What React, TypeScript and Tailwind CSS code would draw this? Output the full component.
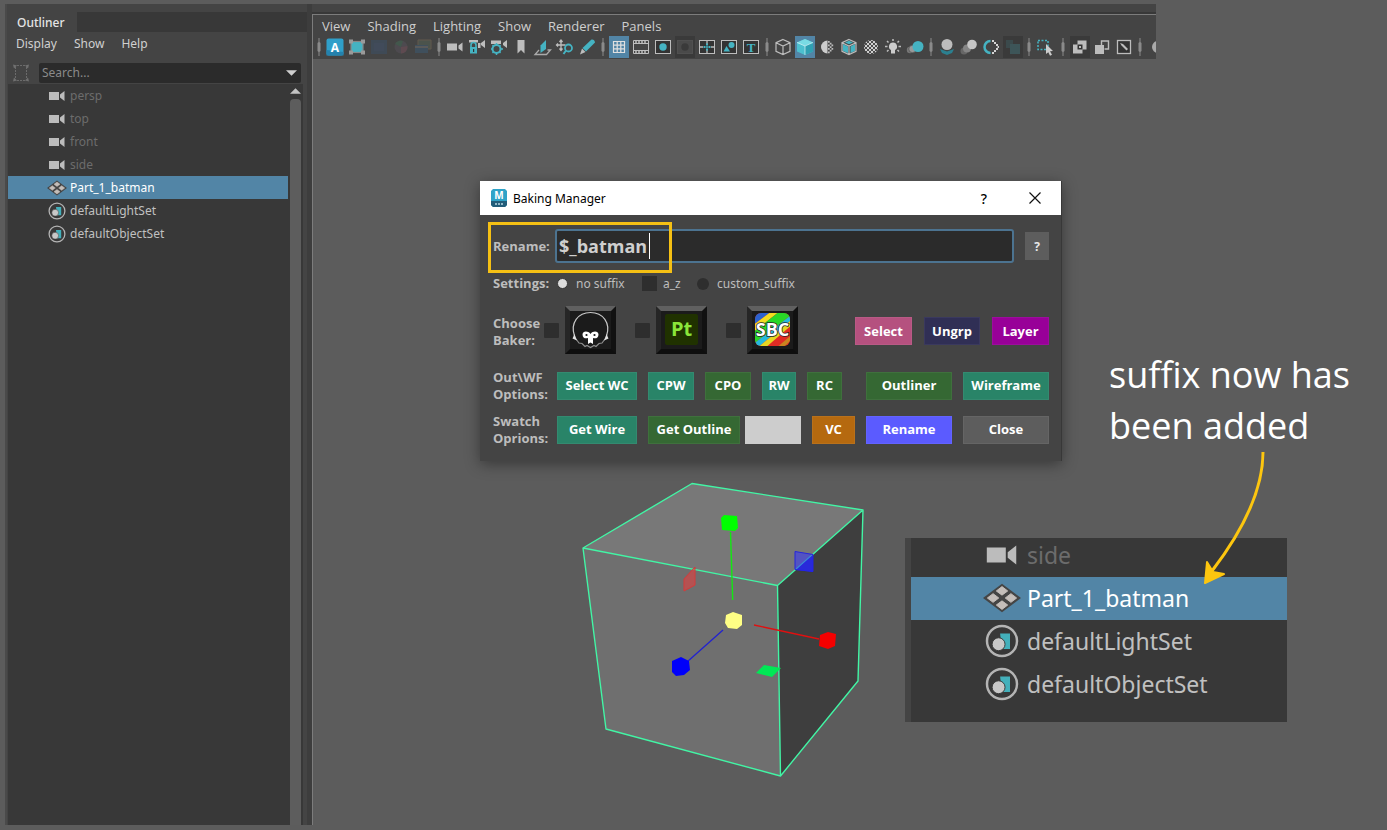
import type { ReactNode } from "react";

const TEAL = "#45b3c2";
const LIGHT = "#bdbdbd";

function Tool({ label, active, pressed, children }: { label: string; active?: boolean; pressed?: boolean; children: ReactNode }) {
  const tone = active ? "bg-[#5285a6]" : pressed ? "bg-[#3a3a3a]" : "";
  return (
    <button type="button" aria-label={label} className="flex h-[22px] w-[22px] flex-none items-center justify-center">
      <svg viewBox="0 0 22 22" className={`h-[22px] w-[20px] ${tone}`} preserveAspectRatio="xMidYMid slice">
        {children}
      </svg>
    </button>
  );
}

function Separator({ wide }: { wide?: boolean }) {
  return (
    <span className={`flex h-[22px] flex-none items-center justify-center ${wide ? "w-[13px]" : "w-[10px]"}`}>
      <svg viewBox="0 0 4 18" className="h-[18px] w-1">
        <path d="M1.500 0h1v4l1 1v8l-1 1v4h-1v-4l-1-1V5l1-1z" fill="#8a8a8a" />
      </svg>
    </span>
  );
}

function CameraGlyph() {
  return <path d="M3 7.500h10v7H3zM18.500 6.500v9l-4-3v-3z" fill={LIGHT} />;
}

function CubeEdges({ stroke }: { stroke: string }) {
  return <path d="M11 3.500l7 3.200v8.600l-7 3.200-7-3.200V6.700zM4 6.700l7 3.300 7-3.300M11 10v8.500" fill="none" stroke={stroke} strokeWidth="1.200" />;
}

function Toolbar() {
  return (
    <div className="flex h-[23px] overflow-hidden pl-px">
      <Separator />
      <Tool label="Select camera">
        <rect x="2.500" y="2.500" width="17" height="17" rx="2" fill="#2f9fc9" />
        <path d="M2.500 14l17 2v3.500h-17z" fill="#2482ae" />
        <text x="11" y="15.500" textAnchor="middle" fontSize="12" fontWeight="700" fontFamily="Open Sans, sans-serif" fill="#fff">A</text>
      </Tool>
      <Tool label="Frame region">
        <rect x="5" y="5.500" width="12" height="11" fill={TEAL} stroke="#888" strokeWidth="1.200" />
        <path d="M3 3.500h4v4H3zM15 3.500h4v4h-4zM3 14.500h4v4H3zM15 14.500h4v4h-4z" fill="#9a9a9a" />
      </Tool>
      <Tool label="Render frame">
        <rect x="3" y="4" width="16" height="14" fill="#3f4a56" />
        <rect x="6" y="7" width="10" height="8" fill="#414b5a" />
      </Tool>
      <Tool label="Color management">
        <circle cx="11" cy="11" r="6.500" fill="#4d4a4f" />
        <path d="M11 11L5 8a6.500 6.500 0 0 1 8-3z" fill="#42574c" />
        <path d="M11 11l6.500-1a6.500 6.500 0 0 1-6.500 7.500z" fill="#5e4a50" />
      </Tool>
      <Tool label="Render sequence">
        <path d="M6 4h13v9H6z" fill="#4b534c" stroke="#63584c" />
        <path d="M3 9h13v8H3z" fill="#3f4f5c" />
        <path d="M3 11h13" stroke="#5a5a5a" strokeWidth="2" />
      </Tool>
      <Separator />
      <Tool label="Camera"><CameraGlyph /></Tool>
      <Tool label="Lock camera">
        <path d="M3 4h9v2.500H3zM19 4v8l-4-3V7z" fill={LIGHT} />
        <path d="M12 7h2.500v5H12z" fill={LIGHT} />
        <path d="M5 11V9a2.500 2.500 0 0 1 5 0v2" fill="none" stroke={TEAL} strokeWidth="1.600" />
        <path d="M4 11h7v6.500H4z" fill={TEAL} />
        <path d="M7 13h1.200v3H7z" fill="#333" />
      </Tool>
      <Tool label="Camera attributes">
        <path d="M3 4.500h10V8H3zM19 4v8l-4-3V7z" fill={LIGHT} />
        <circle cx="8.500" cy="13" r="4" fill="#444" stroke={TEAL} strokeWidth="2" />
        <path d="M8.500 7v2M8.500 17v2M3 13h1M13 13h2M4.500 9l1 1M12.500 9l-1 1M4.500 17l1-1M12.500 17l-1-1" stroke={TEAL} strokeWidth="1.500" />
      </Tool>
      <Tool label="Bookmarks"><path d="M7.500 4h7v13.500L11 14l-3.500 3.500z" fill={LIGHT} /></Tool>
      <Tool label="Image plane">
        <path d="M8.500 9.500L14 4v9l-5.500 4z" fill={TEAL} />
        <path d="M7 14l-4 4.500h11.500l4-4.500h-3" fill="none" stroke="#aaa" strokeWidth="1.300" />
      </Tool>
      <Tool label="2D pan and zoom">
        <path d="M7 4.500v9M2.500 9h9M5.500 6L7 4l1.500 2M5.500 12.500L7 14.500l1.500-2M4 7.500L2.500 9 4 10.500" fill="none" stroke={LIGHT} strokeWidth="1.300" />
        <circle cx="14.500" cy="12" r="3.500" fill="#444" stroke={TEAL} strokeWidth="1.800" />
        <path d="M12 14.500L9.500 18" stroke={TEAL} strokeWidth="2" />
      </Tool>
      <Tool label="Grease pencil">
        <path d="M15.500 3.500q3-.5 3.500 3l-9 9-3.500-3.500z" fill={TEAL} />
        <path d="M6 12.500l3.500 3.500L4 18.500z" fill={LIGHT} />
      </Tool>
      <Separator />
      <Tool label="Grid" active>
        <path d="M5.500 5.500h11v11h-11zM9.200 5.500v11M12.800 5.500v11M5.500 9.200h11M5.500 12.800h11" fill="none" stroke="#e0e0e0" strokeWidth="1.200" />
      </Tool>
      <Tool label="Film gate">
        <path d="M3.500 4.500h15v13h-15zM3.500 7.500h15M3.500 14.500h15" fill="none" stroke={LIGHT} />
        <path d="M5 6h12M5 16h12" stroke={LIGHT} strokeWidth="1.500" strokeDasharray="2 1" />
      </Tool>
      <Tool label="Resolution gate">
        <rect x="3.500" y="4.500" width="15" height="13" fill="#333" stroke={LIGHT} /><circle cx="11" cy="11" r="3.700" fill={TEAL} />
      </Tool>
      <Tool label="Gate mask" pressed>
        <rect x="3.500" y="4.500" width="15" height="13" fill="#4a4a4a" stroke="#505050" /><circle cx="11" cy="11" r="3.700" fill="#3a3a3a" />
      </Tool>
      <Tool label="Field chart">
        <rect x="3.500" y="4.500" width="15" height="13" fill="#333" stroke={LIGHT} />
        <path d="M11 5v3M11 14v3M4 11h3M15 11h3" stroke={LIGHT} strokeWidth="1.300" />
        <path d="M7.500 11h2M12.500 11h2M11 7.500v2M11 12.500v2" stroke={TEAL} strokeWidth="2" />
        <circle cx="11" cy="11" r="1" fill={TEAL} />
      </Tool>
      <Tool label="Safe action">
        <rect x="3.500" y="4.500" width="15" height="13" fill="#333" stroke={LIGHT} />
        <circle cx="13.500" cy="9" r="3" fill={TEAL} /><path d="M5.500 15.500l3-5.500 3.500 5.500z" fill={TEAL} />
      </Tool>
      <Tool label="Safe title">
        <rect x="3.500" y="4.500" width="15" height="13" fill="#333" stroke={LIGHT} />
        <text x="11" y="15.500" textAnchor="middle" fontSize="13" fontWeight="700" fontFamily="Liberation Serif, serif" fill={TEAL}>T</text>
      </Tool>
      <Separator />
      <Tool label="Wireframe shading"><CubeEdges stroke={LIGHT} /></Tool>
      <Tool label="Smooth shading" active>
        <path d="M11 3l8 3.500v9L11 19l-8-3.500v-9z" fill="#4cc0cf" />
        <path d="M11 3l8 3.500-8 3.500-8-3.500z" fill="#79dbe4" />
        <path d="M11 10l8-3.500v9L11 19z" fill="#2fa0b2" />
        <path d="M3 6.500l8 3.500 8-3.500M11 10v9" fill="none" stroke="#d8f3f6" strokeWidth=".7" />
      </Tool>
      <Tool label="Default material">
        <path d="M11.500 4.500v13a6.500 6.500 0 0 1 0-13z" fill="#ccc" />
        <path d="M12 5h1.700v1.700H12zM12 8.500h1.700v1.700H12zM12 12h1.700v1.700H12zM12 15.500h1.700v1.700H12zM13.800 6.700h1.700v1.700h-1.700zM13.800 10.200h1.700v1.700h-1.700zM13.800 13.700h1.700v1.700h-1.700zM15.500 8.500h1.700v1.700h-1.700zM15.500 12h1.700v1.700h-1.700z" fill={LIGHT} />
      </Tool>
      <Tool label="Wireframe on shaded">
        <path d="M5 8l5 2.500v6.500L5 15zM12.500 10.500L17 8v7l-4.500 2zM7 6.500l4-1.700 4 1.700-4 1.700z" fill={TEAL} />
        <CubeEdges stroke={LIGHT} />
      </Tool>
      <Tool label="Textured">
        <defs>
          <pattern id="checker" width="4" height="4" patternUnits="userSpaceOnUse" x="1" y="1">
            <path d="M0 0h2v2H0zM2 2h2v2H2z" fill="#d0d0d0" />
          </pattern>
        </defs>
        <circle cx="11" cy="11" r="7" fill="#4c4c4c" />
        <circle cx="11" cy="11" r="7" fill="url(#checker)" />
      </Tool>
      <Tool label="Use all lights">
        <path d="M11 6.500a4 4 0 0 0-2 7.500v3.500h4V14a4 4 0 0 0-2-7.500z" fill="#ccc" />
        <path d="M11 3v2M5 5l1.500 1.500M17 5l-1.500 1.500M3 10.500h2.500M16.500 10.500H19M5 15.500L6.500 14M17 15.500L15.500 14" stroke={LIGHT} strokeWidth="1.500" />
      </Tool>
      <Tool label="Shadows">
        <circle cx="6" cy="14" r="3.200" fill="#777" /><circle cx="8.500" cy="13" r="3.700" fill="#999" stroke="#444" strokeWidth=".6" /><circle cx="14" cy="10.500" r="5.500" fill={TEAL} />
      </Tool>
      <Separator />
      <Tool label="Ambient occlusion">
        <path d="M4 13l7 2.500 7-2.500-2 4-5 2-5-2z" fill="#2b8090" /><circle cx="11" cy="8.500" r="5.500" fill={LIGHT} />
      </Tool>
      <Tool label="Motion blur">
        <circle cx="6" cy="15" r="3.500" fill="#666" /><circle cx="9" cy="12.500" r="4" fill="#858585" /><circle cx="14" cy="8.500" r="4.800" fill="#c6c6c6" />
      </Tool>
      <Tool label="Anti-aliasing">
        <path d="M10.500 5a6 6 0 0 0 0 12" fill="none" stroke={TEAL} strokeWidth="2.500" />
        <path d="M12 4h2v2h-2zM14 6h2v2h-2zM16 8h2v2h-2zM17.500 10h1.500v2h-1.500zM16 12h2v2h-2zM14 14h2v2h-2zM12 16h2v2h-2z" fill="#d4d4d4" />
      </Tool>
      <Tool label="Depth of field" pressed>
        <rect x="4" y="4" width="7" height="8" fill="#3b4a4c" /><rect x="8" y="8" width="10" height="10" fill="#3d5558" />
      </Tool>
      <Separator />
      <Tool label="Isolate select">
        <path d="M4 4.500h10v9H4z" fill="none" stroke={TEAL} strokeWidth="1.500" strokeDasharray="2 1.500" />
        <path d="M12 8l7 7-3 .3 2 3.400-2 1-1.700-3.500L12 18z" fill="#ccc" />
      </Tool>
      <Separator wide />
      <Tool label="X-ray" pressed>
        <path d="M8.500 4.500h9v9h-9z" fill={LIGHT} /><path d="M4 8.500h9.500v9H4z" fill={LIGHT} />
        <path d="M8.500 8.500h5v5h-5z" fill="#333" /><path d="M10 10h2v2h-2z" fill={LIGHT} />
      </Tool>
      <Tool label="X-ray active components">
        <path d="M10.500 9V5h7v8h-4" fill="none" stroke={LIGHT} strokeWidth="1.400" /><rect x="4" y="9" width="9" height="9" fill={LIGHT} />
      </Tool>
      <Tool label="X-ray joints">
        <rect x="4.500" y="4.500" width="13" height="13" fill="#333" stroke={LIGHT} strokeWidth="1.300" />
        <path d="M7 7l3 1 5 5-1.500 1.500-5-5z" fill={LIGHT} />
      </Tool>
      <Separator />
      <Tool label="Exposure"><circle cx="13" cy="11" r="6" fill="#aaa" /><circle cx="14" cy="11" r="3" fill="#444" /></Tool>
    </div>
  );
}

type Kind = "camera" | "mesh" | "set";

function NodeIcon({ kind, className }: { kind: Kind; className: string }) {
  return (
    <svg viewBox="0 0 20 20" className={className} aria-hidden="true">
      {kind === "camera" && <path d="M2 6h10v8H2zM17.500 5v10L13 11.500v-3z" fill="#bcbcbc" />}
      {kind === "mesh" && (
        <>
          <path d="M10 2.500L20 10l-10 7.500L0 10z" fill="#454545" />
          <path d="M10 4l3 2.300-3 2.200-3-2.200zM5.300 7.700l3 2.300-3 2.300-3-2.300zM14.700 7.700l3 2.300-3 2.300-3-2.300zM10 11.500l3 2.200-3 2.300-3-2.300z" fill="#c4beba" stroke="#c4beba" strokeWidth=".5" strokeLinejoin="round" />
        </>
      )}
      {kind === "set" && (
        <>
          <circle cx="10" cy="10" r="7.900" fill="#383838" stroke="#b4b4b4" strokeWidth="1.300" />
          <path d="M9 6h5.200v8.200H10z" fill="#43b0bb" />
          <circle cx="8.200" cy="11.700" r="3.400" fill="#c8c8c8" stroke="#383838" strokeWidth=".5" />
        </>
      )}
    </svg>
  );
}

const NODES: { name: string; kind: Kind }[] = [
  { name: "persp", kind: "camera" },
  { name: "top", kind: "camera" },
  { name: "front", kind: "camera" },
  { name: "side", kind: "camera" },
  { name: "Part_1_batman", kind: "mesh" },
  { name: "defaultLightSet", kind: "set" },
  { name: "defaultObjectSet", kind: "set" },
];

const rowTone = { camera: "text-[#6c6c6c]", mesh: "bg-[#5285a6] text-white", set: "text-[#c0c0c0]" };

function Outliner() {
  return (
    <aside className="flex w-[302px] flex-none flex-col border-l-2 border-[#4a4a4a] bg-[#444] font-['Noto_Sans',sans-serif] text-[12px] leading-4 text-[#d0d0d0]">
      <div className="mt-2 flex h-5 bg-[#383838]">
        <h2 className="bg-[#444] pt-[3px] pr-3 pl-[10px] font-medium text-[#e4e4e4]">Outliner</h2>
      </div>
      <nav className="flex gap-[17px] pt-1 pb-[10px] pl-[9px]">
        <button type="button">Display</button>
        <button type="button">Show</button>
        <button type="button">Help</button>
      </nav>
      <div className="flex h-[22px] items-center pr-[6px] pl-1">
        <svg viewBox="0 0 20 20" className="mr-2 h-5 w-5 flex-none" aria-hidden="true">
          <path d="M4.500 4v12M15.500 4v12M6 2.500h8M6 17.500h8" stroke="#6b6b6b" strokeDasharray="2 1" />
          <path d="M2 1.500l4 1-3 3zM18 1.500l-4 1 3 3zM2 18.500l4-1-3-3zM18 18.500l-4-1 3-3z" fill="#707070" />
        </svg>
        <div className="flex h-5 min-w-0 flex-1 items-center rounded-[2px] bg-[#2b2b2b] pr-1">
          <input aria-label="Search" placeholder="Search..." className="w-full min-w-0 flex-1 bg-transparent pl-[3px] outline-none placeholder:text-[#8a8a8a]" />
          <button type="button" aria-label="Search options">
            <svg viewBox="0 0 12 6" className="h-[6px] w-[11px]"><path d="M0 0h12L6 6z" fill="#cfcfcf" /></svg>
          </button>
        </div>
      </div>
      <div className="flex flex-1">
        <ul className="ml-px flex-1 bg-[#383838]">
          {NODES.map((n) => (
            <li key={n.name} className={`flex h-[23px] items-center pl-[39px] ${rowTone[n.kind]}`}>
              <NodeIcon kind={n.kind} className="mr-[3px] h-5 w-5 flex-none" />
              {n.name}
            </li>
          ))}
        </ul>
        <div className="mr-1 flex w-[15px] flex-col items-center bg-[#383838] pt-1">
          <svg viewBox="0 0 12 6" className="mb-[5px] h-[6px] w-[11px] flex-none"><path d="M0 6h12L6 0z" fill="#c4c4c4" /></svg>
          <div className="w-[11px] flex-1 rounded-t-[4px] bg-[#5d5d5d]" />
        </div>
      </div>
    </aside>
  );
}

function CubeScene() {
  return (
    <svg viewBox="0 0 310 320" className="absolute top-[470px] left-[570px] h-[320px] w-[310px]" aria-label="Cube with scale manipulator">
      <path d="M122 13.500L293 40 207 115.500 13 78z" fill="#787878" />
      <path d="M13 78l194 37.500 3.500 190.500L36 259z" fill="#6f6f6f" />
      <path d="M207.500 115.500L293 40l-5 171-77.500 95z" fill="#3e3e3e" />
      <path d="M122 13.500L293 40l-5 171-77.500 95L36 259 13 78zM13 78l194.500 37.500L293 40M207.500 115.500l3 190.500" fill="none" stroke="#42f5a5" strokeWidth="1.400" strokeLinejoin="round" />
      <path d="M160.500 62l2.200 68" stroke="#12e812" strokeWidth="1.400" />
      <path d="M151 48l3-3 13 1 1 12-3 3-13-1z" fill="#00ff00" />
      <path d="M184 155l65 14" stroke="#e01010" strokeWidth="1.400" />
      <path d="M250 165l8-3 8 2-1 12-7 3-9-3z" fill="#f50000" />
      <path d="M153 160l-36 32" stroke="#2222d0" strokeWidth="1.400" />
      <path d="M102 191l9-4 8 4 1 9-6 5-8 1-4-4z" fill="#0000fa" />
      <path d="M156 145l7-3 9 3v10l-5 4-9-1-3-5z" fill="#ffff85" />
      <path d="M225 81.500l18 3v17l-18-2z" fill="#3434ff" fillOpacity=".55" stroke="#2525dd" />
      <path d="M237 90l6-5v17l-17-2z" fill="#2222ef" fillOpacity=".7" />
      <path d="M114 109l11-12v18l-11 6z" fill="#e54040" fillOpacity=".6" stroke="#d63a3a" />
      <path d="M186 203l8-8 17 3-9 9z" fill="#00e855" />
    </svg>
  );
}

function BakerTile({ label, children }: { label: string; children: ReactNode }) {
  return (
    <div className="mr-[19px] flex items-center gap-[6px]">
      <input type="checkbox" aria-label={`Use ${label}`} className="h-[15px] w-[15px] appearance-none rounded-[1px] bg-[#2e2e2e]" />
      <button type="button" aria-label={label} className="h-12 w-[51px] border-[5px] border-t-[#606060] border-r-[#111] border-b-[#0e0e0e] border-l-[#262626] bg-[#1b1b1b]">
        <svg viewBox="0 0 41 38" className="h-full w-full">{children}</svg>
      </button>
    </div>
  );
}

const actionBase = "h-7 flex-none text-center text-white outline outline-1 -outline-offset-1 outline-white/5";

function BakingDialog() {
  return (
    <section role="dialog" aria-label="Baking Manager" className="absolute top-[181px] left-[480px] w-[582px] border-r border-[#383838] bg-[#444] text-[13px] leading-[17px] text-[#bdbdbd] shadow-[0_3px_14px_rgba(0,0,0,0.4)]">
      <header className="flex h-[34px] items-center bg-white pl-[10px] font-['Noto_Sans',sans-serif] text-[12px] text-black">
        <svg viewBox="0 0 18 20" className="mr-[5px] h-5 w-[18px]" aria-hidden="true">
          <path d="M3 1h12l2 2v14l-2 2H3l-2-2V3z" fill="#2fa3c8" />
          <path d="M1 13h16v4l-2 2H3l-2-2z" fill="#225c79" />
          <text x="9" y="11" textAnchor="middle" fontSize="10" fontWeight="700" fontFamily="Open Sans, sans-serif" fill="#fff">M</text>
          <path d="M5 16h8" stroke="#b8d6e2" strokeWidth="1.500" strokeDasharray="2 1" />
        </svg>
        <h1 className="flex-1">Baking Manager</h1>
        <button type="button" aria-label="Help" className="w-[50px] text-[14px] font-medium">?</button>
        <button type="button" aria-label="Close window" className="flex w-[52px] justify-center">
          <svg viewBox="0 0 12 12" className="h-3 w-3"><path d="M.5.5l11 11M11.500.5l-11 11" stroke="#111" strokeWidth="1.200" /></svg>
        </button>
      </header>
      <div className="flex flex-col pt-[14px] pr-3 pb-[14px] pl-[13px]">
        <div className="flex items-center">
          <label htmlFor="rename" className="w-[62px] font-bold">Rename:</label>
          <div className="flex h-[34px] min-w-0 flex-1 items-center rounded-[3px] border-2 border-[#4c7390] bg-[#2b2b2b] pl-[2px]">
            <input id="rename" defaultValue="$_batman" className="h-full w-[90px] min-w-0 bg-transparent text-[18px] font-bold text-[#cfcfcf] outline-none" />
            <span className="h-[26px] w-px bg-white" />
          </div>
          <button type="button" aria-label="Rename help" className="ml-[11px] h-7 w-6 bg-[#5d5d5d] text-[12px] font-bold text-[#e8e8e8]">?</button>
        </div>
        <div className="mt-3 flex h-[17px] items-center font-['Noto_Sans',sans-serif] text-[12px]">
          <span className="w-[64px] font-['Open_Sans',sans-serif] text-[13px] font-bold">Settings:</span>
          <input id="nosuffix" type="radio" name="suffix" defaultChecked className="h-[11px] w-[11px] appearance-none rounded-full border border-[#373737] bg-[#dcdcdc]" />
          <label htmlFor="nosuffix" className="ml-2 w-[66px]">no suffix</label>
          <input id="az" type="checkbox" className="h-[15px] w-[15px] appearance-none bg-[#2e2e2e]" />
          <label htmlFor="az" className="ml-[6px] w-[34px]">a_z</label>
          <input id="custom" type="radio" name="suffix" className="h-3 w-3 appearance-none rounded-full bg-[#2e2e2e]" />
          <label htmlFor="custom" className="ml-2">custom_suffix</label>
        </div>
        <div className="mt-[14px] flex items-center">
          <span className="w-[51px] pt-[3px] font-bold">Choose<br />Baker:</span>
          <BakerTile label="Marmoset">
            <path d="M4.500 25C0 12 8 1.500 20.500 1.500S41 12 36.500 25" fill="none" stroke="#c8c8c8" strokeWidth="1.200" />
            <path d="M6 28l3 4 3 .5 3 3 2-1 3.500 2 3.500-2 2 1 3-3 3-.5 3-4" fill="none" stroke="#8f8f8f" strokeWidth="1.200" />
            <path d="M4.500 23l-2 4.500 4.500 2zM36.500 23l2 4.500-4.500 2z" fill="#e2e2e2" />
            <path d="M12.500 23.500c0-3.500 5.500-4 8-.5 2.500-3.500 8-3 8 .5s-3 4.500-5.500 3.500V33l-2.500-1.500L18 33v-6c-2.500 1-5.500 0-5.500-3.500z" fill="#fff" />
            <circle cx="16.500" cy="24" r="1.100" fill="#1b1b1b" /><circle cx="24.500" cy="24" r="1.100" fill="#1b1b1b" />
          </BakerTile>
          <BakerTile label="Substance Painter">
            <rect x="4" y="3" width="33" height="31" rx="2" fill="#203200" />
            <text x="20.500" y="25" textAnchor="middle" fontSize="20" fontWeight="700" fontFamily="Open Sans, sans-serif" fill="#8be53a">Pt</text>
          </BakerTile>
          <BakerTile label="SBC">
            <clipPath id="sbc"><rect x="3" y="2" width="35" height="33" rx="6" /></clipPath>
            <g clipPath="url(#sbc)">
              <rect width="42" height="38" fill="#e02c24" />
              <path d="M0 0h20L0 15z" fill="#2b62cf" />
              <path d="M20 0h8L0 22v-7z" fill="#f2dc20" />
              <path d="M28 0h14v2L0 34V22z" fill="#28d827" />
              <path d="M42 2v5L4 38H0v-4z" fill="#24b9dd" />
              <path d="M42 7v5L12 38H4z" fill="#e6d623" />
              <path d="M42 22v4L30 38h-7z" fill="#c98420" />
            </g>
            <text x="20.500" y="25" textAnchor="middle" fontSize="18" fontWeight="700" fontFamily="Open Sans, sans-serif" fill="#fff" stroke="#222" strokeWidth="1.500" paintOrder="stroke">SBC</text>
          </BakerTile>
          <div className="ml-auto flex gap-3 pt-[2px] font-bold">
            <button type="button" className={`${actionBase} w-[57px] bg-[#b5517f]`}>Select</button>
            <button type="button" className={`${actionBase} w-[56px] bg-[#302f55]`}>Ungrp</button>
            <button type="button" className={`${actionBase} w-[57px] bg-[#980098]`}>Layer</button>
          </div>
        </div>
        <div className="mt-[14px] flex items-center gap-[11px] font-bold">
          <span className="-mr-[11px] w-[64px] pt-px">Out\WF<br />Options:</span>
          <button type="button" className={`${actionBase} w-20 bg-[#298468]`}>Select WC</button>
          <button type="button" className={`${actionBase} w-[46px] bg-[#298468]`}>CPW</button>
          <button type="button" className={`${actionBase} w-[46px] bg-[#356833]`}>CPO</button>
          <button type="button" className={`${actionBase} w-[34px] bg-[#298468]`}>RW</button>
          <button type="button" className={`${actionBase} w-[35px] bg-[#356833]`}>RC</button>
          <button type="button" className={`${actionBase} ml-auto w-[86px] bg-[#356833]`}>Outliner</button>
          <button type="button" className={`${actionBase} w-[86px] bg-[#298468]`}>Wireframe</button>
        </div>
        <div className="mt-[9px] flex items-center gap-[11px] font-bold">
          <span className="-mr-[11px] w-[64px] pt-px">Swatch<br />Oprions:</span>
          <button type="button" className={`${actionBase} w-20 bg-[#298468]`}>Get Wire</button>
          <div className="flex gap-[5px]">
            <button type="button" className={`${actionBase} w-[92px] bg-[#356833]`}>Get Outline</button>
            <button type="button" aria-label="Swatch color" className="h-7 w-14 bg-[#cdcdcd]" />
          </div>
          <button type="button" className={`${actionBase} w-[43px] bg-[#b5690f]`}>VC</button>
          <button type="button" className={`${actionBase} ml-auto w-[86px] bg-[#5b5bff]`}>Rename</button>
          <button type="button" className={`${actionBase} w-[86px] bg-[#5d5d5d]`}>Close</button>
        </div>
      </div>
      <div className="pointer-events-none absolute top-[41px] left-2 h-[51px] w-[184px] border-[3px] border-[#f5c014]" />
    </section>
  );
}

function OutlinerCloseUp() {
  return (
    <ul className="absolute top-[538px] left-[905px] w-[382px] border-l-[6px] border-[#444] bg-[#383838] pb-4 font-['Noto_Sans',sans-serif] text-[23px] leading-8">
      {NODES.slice(3).map((n) => (
        <li key={n.name} className={`flex items-center pl-[72px] ${n.kind === "camera" ? "h-[39px] pb-[5px]" : "h-[43px] pb-[2px]"} ${rowTone[n.kind]}`}>
          <NodeIcon kind={n.kind} className="mr-[6px] h-[38px] w-[38px] flex-none" />
          {n.name}
        </li>
      ))}
    </ul>
  );
}

export default function App() {
  return (
    <div className="relative flex min-h-screen overflow-hidden bg-[#5c5c5c] pt-1 pb-[5px] pl-[5px] font-['Open_Sans','Noto_Sans',sans-serif]">
      <Outliner />
      <main className="flex flex-1 flex-col border-l-[5px] border-[#3d3d3d]">
        <div className="h-[10px] w-[844px] border-b-2 border-[#383838] bg-[#444]" />
        <div className="flex-1 border-l border-[#7c7c7c]">
          <div className="w-[843px] border-t border-[#7c7c7c] bg-[#444]">
            <nav className="flex h-[21px] items-center gap-[17px] pl-[9px] text-[13px] leading-4 text-[#cfcfcf]">
              {["View", "Shading", "Lighting", "Show", "Renderer", "Panels"].map((m) => (
                <button key={m} type="button">{m}</button>
              ))}
            </nav>
            <Toolbar />
          </div>
        </div>
      </main>
      <CubeScene />
      <BakingDialog />
      <OutlinerCloseUp />
      <p className="absolute top-[349px] left-[1109px] text-[36px] leading-[51px] text-white">
        suffix now has<br />been added
      </p>
      <svg viewBox="0 0 70 140" className="absolute top-[450px] left-[1200px] h-[140px] w-[70px]" aria-hidden="true">
        <path d="M63 2C63 45 38 87 12 121" fill="none" stroke="#fdc60f" strokeWidth="3" />
        <path d="M7 112l6 10 11 2-19 9z" fill="#fdc60f" stroke="#fdc60f" strokeWidth="2" strokeLinejoin="round" />
      </svg>
    </div>
  );
}
